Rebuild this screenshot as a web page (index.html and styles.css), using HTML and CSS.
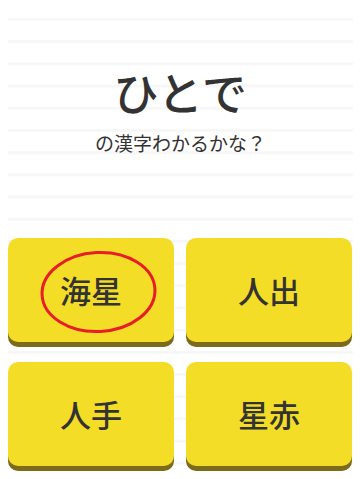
FILE: index.html
```html
<!DOCTYPE html>
<html lang="ja">
<head>
<meta charset="utf-8">
<link rel="stylesheet" href="styles.css">
</head>
<body>
<div class="page">
  <div class="board">
    <div class="question">
      <h1 class="word">ひとで</h1>
      <p class="prompt">の漢字わかるかな？</p>
    </div>
    <div class="choices">
      <button class="choice">
        <span class="label">海星</span>
        <svg class="mark" width="166" height="104" viewBox="0 0 166 104"><ellipse cx="90.5" cy="54" rx="56.5" ry="39.5" fill="none" stroke="#e61e2a" stroke-width="3" transform="rotate(-3 90.5 54)"/></svg>
      </button>
      <button class="choice"><span class="label">人出</span></button>
      <button class="choice"><span class="label">人手</span></button>
      <button class="choice"><span class="label">星赤</span></button>
    </div>
  </div>
</div>
</body>
</html>
```
FILE: styles.css
```css
html, body {
  margin: 0;
  padding: 0;
  background: #ffffff;
}
.page {
  width: 361px;
  height: 479px;
  padding: 0 8px;
  box-sizing: border-box;
  font-family: "Noto Sans CJK JP", "Noto Sans", sans-serif;
  color: #333333;
}
.board {
  height: 479px;
  background-image: linear-gradient(#f7f7f7 0 3px, transparent 3px);
  background-size: 100% 22.2px;
  background-position: 0 18px;
}
.question {
  height: 238px;
  display: flex;
  flex-direction: column;
  align-items: center;
}
.word {
  margin: 64px 0 0;
  font-size: 45px;
  line-height: 56px;
  font-weight: 500;
  letter-spacing: 0.5px;
}
.prompt {
  margin: 11px 0 0;
  font-size: 19px;
  line-height: 24px;
  font-weight: 400;
}
.choices {
  display: grid;
  grid-template-columns: 166px 166px;
  column-gap: 12px;
  row-gap: 20px;
}
.choice {
  position: relative;
  height: 104px;
  border: none;
  padding: 0;
  border-radius: 10px;
  background: #f4dd26;
  box-shadow: 0 5px 0 #7b6b1b;
  font-family: inherit;
  color: #333333;
  display: flex;
  align-items: center;
  justify-content: center;
}
.label {
  font-size: 31px;
  font-weight: 500;
  line-height: 40px;
}
.mark {
  position: absolute;
  left: 0;
  top: 0;
}
```
